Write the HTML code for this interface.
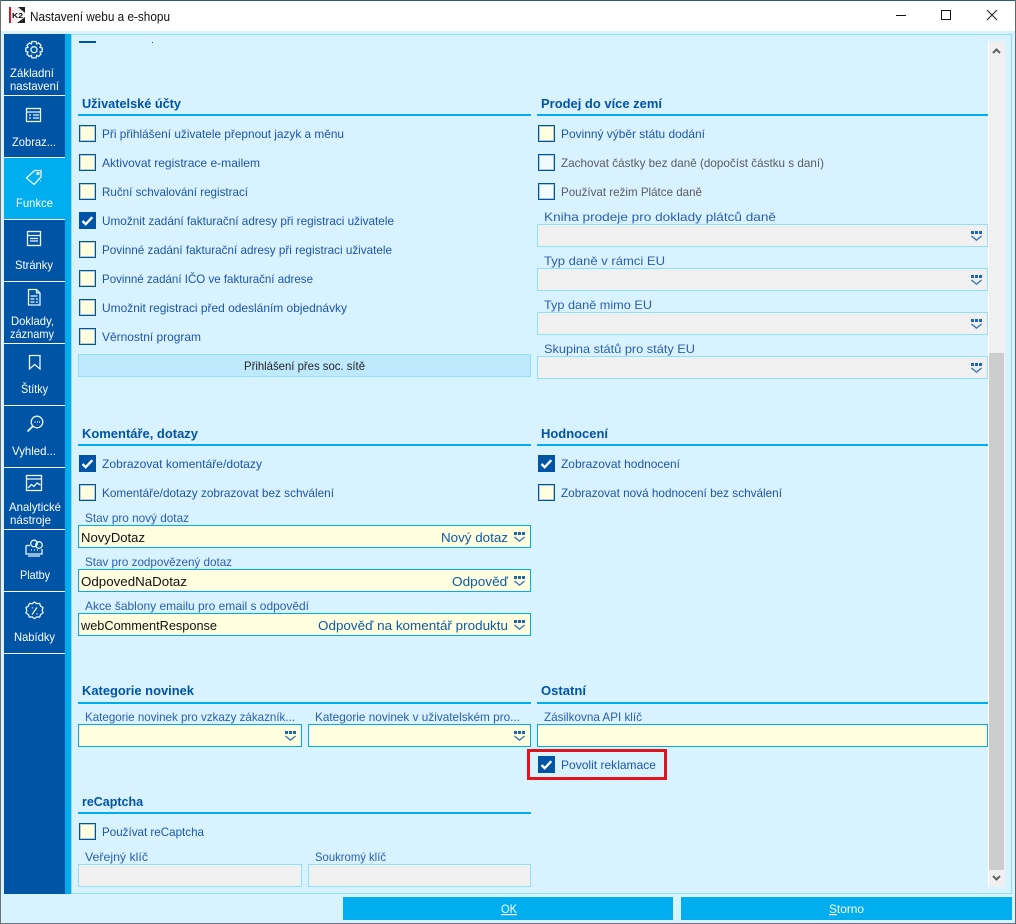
<!DOCTYPE html>
<html><head><meta charset="utf-8"><title>Nastavení webu a e-shopu</title>
<style>
html,body{margin:0;padding:0;background:#d9f2ff;width:1016px;height:924px;overflow:hidden}
svg{display:block;position:absolute;left:0;top:0}
text{font-family:"Liberation Sans",sans-serif;font-size:12px;fill:#1c55ac;white-space:pre}
.h{font-weight:bold;fill:#0054a6;font-size:13px}
.s{fill:#fff}
.l{fill:#2a5fae}
.g{fill:#5a5a62}
.v{fill:#111;font-size:13px}
.r{fill:#0f5aa6;font-size:13px}
.d{fill:#222}
.t{fill:#111;font-size:12.5px}
.ic{fill:none;stroke:#eaf5fc;stroke-width:1.3}
</style></head><body>
<svg width="1016" height="924" viewBox="0 0 1016 924" xmlns="http://www.w3.org/2000/svg" shape-rendering="crispEdges">
<defs>
<g id="cb"><rect x="0.5" y="0.5" width="16" height="16" fill="#ffffe0" stroke="#0054a6"/><rect x="1.500" y="1.500" width="14" height="14" fill="none" stroke="#0054a6" stroke-opacity=".3"/></g>
<g id="cw"><rect x="0.5" y="0.5" width="16" height="16" fill="#f2fbff" stroke="#0054a6"/><rect x="1.500" y="1.500" width="14" height="14" fill="none" stroke="#0054a6" stroke-opacity=".3"/></g>
<g id="ck"><rect width="17" height="17" fill="#0054a6"/><path d="M3.500 9l3.200 3.200 6.600-7" fill="none" stroke="#fff" stroke-width="2.400" shape-rendering="auto"/></g>
<g id="dd"><rect x="0" y="0" width="3" height="3" fill="#1c66b4"/><rect x="4" y="0" width="3" height="3" fill="#1c66b4"/><rect x="8" y="0" width="3" height="3" fill="#1c66b4"/><path d="M0.500 5l5 4.200 5-4.200" fill="none" stroke="#2a70b8" stroke-width="1.300" shape-rendering="auto"/></g>
</defs>

<!-- window -->
<rect width="1016" height="924" fill="#d9f2ff"/>
<rect width="1016" height="31" fill="#fff"/>
<rect width="1016" height="1" fill="#2c5a6e"/>
<rect x="0" y="0" width="1" height="924" fill="#6b7075"/>
<rect x="1015" y="0" width="1" height="924" fill="#5a6a72"/>
<rect x="0" y="923" width="1016" height="1" fill="#6b7075"/>

<!-- logo -->
<rect x="9" y="7" width="16" height="16" fill="#f2f2f2"/>
<rect x="9" y="7" width="2" height="16" fill="#d0182c"/>
<path d="M18 7h7v6zM25 17v6h-8z" fill="#222" shape-rendering="auto"/>
<text x="12" y="18" style="font-size:7px;font-weight:bold;fill:#111" textLength="11" lengthAdjust="spacingAndGlyphs">K2</text>
<text x="30" y="21" class="t" textLength="140" lengthAdjust="spacingAndGlyphs">Nastavení webu a e-shopu</text>

<!-- window controls -->
<rect x="896" y="15" width="10" height="1" fill="#111"/>
<rect x="941.500" y="10.500" width="9" height="9" fill="none" stroke="#111"/>
<path d="M987 10l10 10M997 10l-10 10" stroke="#222" stroke-width="1.100" fill="none" shape-rendering="auto"/>

<!-- frame -->
<rect x="71.500" y="34.500" width="940" height="859" fill="#d9f2ff" stroke="#8fdfff"/>

<!-- sidebar -->
<rect x="4" y="34" width="61" height="860" fill="#0054a6"/>
<rect x="65" y="34" width="6" height="860" fill="#00aeef"/>
<rect x="4" y="158" width="61" height="61" fill="#00aeef"/>
<rect x="4" y="95" width="61" height="1" fill="#fff"/>
<rect x="4" y="157" width="61" height="1" fill="#fff"/>
<rect x="4" y="219" width="61" height="1" fill="#fff"/>
<rect x="4" y="281" width="61" height="1" fill="#fff"/>
<rect x="4" y="343" width="61" height="1" fill="#fff"/>
<rect x="4" y="405" width="61" height="1" fill="#fff"/>
<rect x="4" y="467" width="61" height="1" fill="#fff"/>
<rect x="4" y="529" width="61" height="1" fill="#fff"/>
<rect x="4" y="591" width="61" height="1" fill="#fff"/>
<rect x="4" y="653" width="61" height="1" fill="#fff"/>

<text class="s" x="10" y="77" textLength="44" lengthAdjust="spacingAndGlyphs">Základní</text>
<text class="s" x="10" y="90" textLength="49" lengthAdjust="spacingAndGlyphs">nastavení</text>
<text class="s" x="12" y="146" textLength="44" lengthAdjust="spacingAndGlyphs">Zobraz...</text>
<text class="s" x="16" y="207" textLength="37" lengthAdjust="spacingAndGlyphs">Funkce</text>
<text class="s" x="15" y="269" textLength="38" lengthAdjust="spacingAndGlyphs">Stránky</text>
<text class="s" x="11" y="325" textLength="43" lengthAdjust="spacingAndGlyphs">Doklady,</text>
<text class="s" x="10" y="338" textLength="44" lengthAdjust="spacingAndGlyphs">záznamy</text>
<text class="s" x="21" y="393" textLength="27" lengthAdjust="spacingAndGlyphs">Štítky</text>
<text class="s" x="12" y="455" textLength="44" lengthAdjust="spacingAndGlyphs">Vyhled...</text>
<text class="s" x="9" y="511" textLength="52" lengthAdjust="spacingAndGlyphs">Analytické</text>
<text class="s" x="10" y="524" textLength="41" lengthAdjust="spacingAndGlyphs">nástroje</text>
<text class="s" x="20" y="579" textLength="30" lengthAdjust="spacingAndGlyphs">Platby</text>
<text class="s" x="14" y="641" textLength="41" lengthAdjust="spacingAndGlyphs">Nabídky</text>

<!-- sidebar icons -->
<g class="ic" shape-rendering="auto">
<path d="M32 41.500h4l.6 2.300 2-.9 2.400 2.400-1 2 2.200.7v3.400l-2.200.7 1 2-2.400 2.400-2-1-.6 2.400h-4l-.6-2.400-2 1-2.400-2.400 1-2-2.200-.7V48l2.200-.7-1-2 2.400-2.400 2 .9z"/><circle cx="34" cy="49.700" r="3"/>
<rect x="26.500" y="108.500" width="14" height="13"/><path d="M26.500 112h14M29 115h2M33 115h6M29 118h2M33 118h6" />
<path d="M26.500 178l8-7.500h6.500v6.500l-7 7.500z"/><circle cx="38" cy="173.500" r="1"/><path d="M37 181l3-3M40 181h.8"/>
<rect x="27.500" y="231.500" width="13" height="14"/><path d="M27.500 235.500h13M30 238.500h8M30 241h8M29 245.500h2M33 245.500h2M37 245.500h2"/>
<path d="M28.500 289.500h8l3.500 3.500v12h-11.500zM36.500 289.500v3.500h3.500M30.500 296h7M30.500 299h4M36 299h2M30.500 302h4M36 302h2"/>
<path d="M29.500 355.500h10.500v13.500l-5.250-4.500-5.250 4.500z"/>
<circle cx="37" cy="422" r="5.800"/><path d="M32.800 426.200l-5.300 5.300" stroke-width="1.800"/><path d="M34.500 422h1M37 422h1M39 422h1"/>
<rect x="26.500" y="475.500" width="15" height="15"/><path d="M26.500 479h15M28 488l3.500-3.500 2.500 2 3-3.500 3.500 2"/>
<path d="M26 545.500h4M26 545.500v8.500h16v-5M28 556h12"/><circle cx="34" cy="543.500" r="3.300"/><circle cx="39" cy="545" r="3.300"/><path d="M31 550h1M34 550h1M37 550h1"/>
<path d="M34.500 602l2.300 1.700 2.800-.3 1 2.700 2.400 1.500-.8 2.700.8 2.700-2.400 1.500-1 2.700-2.800-.3-2.300 1.700-2.300-1.700-2.800.3-1-2.700-2.400-1.500.8-2.700-.8-2.700 2.400-1.500 1-2.700 2.800.3z"/><path d="M37 607.500l-5 7M31.800 607.800h1M36.500 613.800h1"/>
</g>

<!-- top stubs -->
<rect x="79" y="41" width="17" height="2" fill="#0054a6"/>
<rect x="152" y="42" width="1" height="1" fill="#0054a6"/>

<!-- section underlines -->
<rect x="78" y="114" width="453" height="2" fill="#00aeef"/><rect x="537" y="114" width="451" height="2" fill="#00aeef"/>
<rect x="78" y="444" width="453" height="2" fill="#00aeef"/><rect x="537" y="444" width="451" height="2" fill="#00aeef"/>
<rect x="78" y="702" width="453" height="2" fill="#00aeef"/><rect x="537" y="702" width="451" height="2" fill="#00aeef"/>
<rect x="78" y="812" width="453" height="2" fill="#00aeef"/>

<!-- headings -->
<text class="h" x="82" y="108" textLength="99" lengthAdjust="spacingAndGlyphs">Uživatelské účty</text>
<text class="h" x="541" y="108" textLength="121" lengthAdjust="spacingAndGlyphs">Prodej do více zemí</text>
<text class="h" x="82" y="438" textLength="116" lengthAdjust="spacingAndGlyphs">Komentáře, dotazy</text>
<text class="h" x="541" y="438" textLength="67" lengthAdjust="spacingAndGlyphs">Hodnocení</text>
<text class="h" x="82" y="695" textLength="112" lengthAdjust="spacingAndGlyphs">Kategorie novinek</text>
<text class="h" x="541" y="695" textLength="45" lengthAdjust="spacingAndGlyphs">Ostatní</text>
<text class="h" x="82" y="806" textLength="61" lengthAdjust="spacingAndGlyphs">reCaptcha</text>

<!-- checkboxes -->
<use href="#cb" x="79" y="125"/><text x="102" y="138" textLength="242" lengthAdjust="spacingAndGlyphs">Při přihlášení uživatele přepnout jazyk a měnu</text>
<use href="#cb" x="79" y="154"/><text x="102" y="167" textLength="158" lengthAdjust="spacingAndGlyphs">Aktivovat registrace e-mailem</text>
<use href="#cb" x="79" y="183"/><text x="102" y="196" textLength="146" lengthAdjust="spacingAndGlyphs">Ruční schvalování registrací</text>
<use href="#ck" x="79" y="212"/><text x="102" y="225" textLength="292" lengthAdjust="spacingAndGlyphs">Umožnit zadání fakturační adresy při registraci uživatele</text>
<use href="#cb" x="79" y="241"/><text x="102" y="254" textLength="290" lengthAdjust="spacingAndGlyphs">Povinné zadání fakturační adresy při registraci uživatele</text>
<use href="#cb" x="79" y="270"/><text x="102" y="283" textLength="211" lengthAdjust="spacingAndGlyphs">Povinné zadání IČO ve fakturační adrese</text>
<use href="#cb" x="79" y="299"/><text x="102" y="312" textLength="245" lengthAdjust="spacingAndGlyphs">Umožnit registraci před odesláním objednávky</text>
<use href="#cb" x="79" y="328"/><text x="102" y="341" textLength="99" lengthAdjust="spacingAndGlyphs">Věrnostní program</text>

<rect x="78.500" y="354.500" width="452" height="22" fill="#bfeafd" stroke="#8fdfff"/>
<text class="d" x="244" y="370" textLength="121" lengthAdjust="spacingAndGlyphs">Přihlášení přes soc. sítě</text>

<use href="#cb" x="538" y="125"/><text x="561" y="138" textLength="144" lengthAdjust="spacingAndGlyphs">Povinný výběr státu dodání</text>
<use href="#cw" x="538" y="154"/><text class="g" x="561" y="167" textLength="263" lengthAdjust="spacingAndGlyphs">Zachovat částky bez daně (dopočíst částku s daní)</text>
<use href="#cw" x="538" y="183"/><text class="g" x="561" y="196" textLength="141" lengthAdjust="spacingAndGlyphs">Používat režim Plátce daně</text>

<text class="l" x="544" y="221" textLength="232" lengthAdjust="spacingAndGlyphs">Kniha prodeje pro doklady plátců daně</text>
<text class="l" x="544" y="265" textLength="121" lengthAdjust="spacingAndGlyphs">Typ daně v rámci EU</text>
<text class="l" x="544" y="309" textLength="108" lengthAdjust="spacingAndGlyphs">Typ daně mimo EU</text>
<text class="l" x="544" y="353" textLength="151" lengthAdjust="spacingAndGlyphs">Skupina států pro státy EU</text>
<rect x="537.500" y="224.500" width="450" height="22" fill="#f0f0f0" stroke="#8fdfff"/><use href="#dd" x="971" y="231"/>
<rect x="537.500" y="268.500" width="450" height="22" fill="#f0f0f0" stroke="#8fdfff"/><use href="#dd" x="971" y="275"/>
<rect x="537.500" y="312.500" width="450" height="22" fill="#f0f0f0" stroke="#8fdfff"/><use href="#dd" x="971" y="319"/>
<rect x="537.500" y="356.500" width="450" height="22" fill="#f0f0f0" stroke="#8fdfff"/><use href="#dd" x="971" y="363"/>

<!-- comments -->
<use href="#ck" x="79" y="455"/><text x="102" y="468" textLength="160" lengthAdjust="spacingAndGlyphs">Zobrazovat komentáře/dotazy</text>
<use href="#cb" x="79" y="484"/><text x="102" y="497" textLength="232" lengthAdjust="spacingAndGlyphs">Komentáře/dotazy zobrazovat bez schválení</text>
<text class="l" x="85" y="522" textLength="104" lengthAdjust="spacingAndGlyphs">Stav pro nový dotaz</text>
<text class="l" x="85" y="566" textLength="147" lengthAdjust="spacingAndGlyphs">Stav pro zodpovězený dotaz</text>
<text class="l" x="85" y="610" textLength="224" lengthAdjust="spacingAndGlyphs">Akce šablony emailu pro email s odpovědí</text>
<rect x="78.500" y="525.500" width="452" height="22" fill="#ffffe0" stroke="#00aeef"/><use href="#dd" x="514" y="532"/>
<rect x="78.500" y="569.500" width="452" height="22" fill="#ffffe0" stroke="#00aeef"/><use href="#dd" x="514" y="576"/>
<rect x="78.500" y="613.500" width="452" height="22" fill="#ffffe0" stroke="#00aeef"/><use href="#dd" x="514" y="620"/>
<text class="v" x="81" y="542" textLength="64" lengthAdjust="spacingAndGlyphs">NovyDotaz</text>
<text class="v" x="81" y="586" textLength="106" lengthAdjust="spacingAndGlyphs">OdpovedNaDotaz</text>
<text class="v" x="81" y="630" textLength="136" lengthAdjust="spacingAndGlyphs">webCommentResponse</text>
<text class="r" x="441" y="542" textLength="67" lengthAdjust="spacingAndGlyphs">Nový dotaz</text>
<text class="r" x="452" y="586" textLength="56" lengthAdjust="spacingAndGlyphs">Odpověď</text>
<text class="r" x="318" y="630" textLength="190" lengthAdjust="spacingAndGlyphs">Odpověď na komentář produktu</text>

<!-- ratings -->
<use href="#ck" x="538" y="455"/><text x="561" y="468" textLength="119" lengthAdjust="spacingAndGlyphs">Zobrazovat hodnocení</text>
<use href="#cb" x="538" y="484"/><text x="561" y="497" textLength="221" lengthAdjust="spacingAndGlyphs">Zobrazovat nová hodnocení bez schválení</text>

<!-- news -->
<text class="l" x="85" y="721" textLength="210" lengthAdjust="spacingAndGlyphs">Kategorie novinek pro vzkazy zákazník...</text>
<text class="l" x="315" y="721" textLength="205" lengthAdjust="spacingAndGlyphs">Kategorie novinek v uživatelském pro...</text>
<rect x="78.500" y="724.500" width="223" height="22" fill="#ffffe0" stroke="#00aeef"/><use href="#dd" x="285" y="731"/>
<rect x="308.500" y="724.500" width="222" height="22" fill="#ffffe0" stroke="#00aeef"/><use href="#dd" x="514" y="731"/>

<text class="l" x="544" y="721" textLength="98" lengthAdjust="spacingAndGlyphs">Zásilkovna API klíč</text>
<rect x="537.500" y="724.500" width="450" height="22" fill="#ffffe0" stroke="#00aeef"/>

<rect x="528.500" y="750.500" width="137" height="28" fill="none" stroke="#e0141f" stroke-width="3"/>
<use href="#ck" x="538" y="756"/><text x="561" y="769" textLength="95" lengthAdjust="spacingAndGlyphs">Povolit reklamace</text>

<!-- recaptcha -->
<use href="#cb" x="79" y="823"/><text x="102" y="836" textLength="102" lengthAdjust="spacingAndGlyphs">Používat reCaptcha</text>
<text class="l" x="85" y="861" textLength="63" lengthAdjust="spacingAndGlyphs">Veřejný klíč</text>
<text class="l" x="315" y="861" textLength="71" lengthAdjust="spacingAndGlyphs">Soukromý klíč</text>
<rect x="78.500" y="864.500" width="223" height="22" fill="#f0f0f0" stroke="#8fdfff"/>
<rect x="308.500" y="864.500" width="222" height="22" fill="#f0f0f0" stroke="#8fdfff"/>

<!-- scrollbar -->
<rect x="988" y="41" width="1" height="846" fill="#fff"/>
<rect x="989" y="41" width="16" height="846" fill="#f0f0f0"/>
<rect x="989" y="353" width="15" height="517" fill="#cdcdcd"/>
<path d="M993 53l3.500-3.500L1000 53" fill="none" stroke="#606060" stroke-width="2" shape-rendering="auto"/>
<path d="M993 876l3.500 3.500 3.500-3.500" fill="none" stroke="#606060" stroke-width="2" shape-rendering="auto"/>

<!-- buttons -->
<rect x="343" y="897" width="330" height="23" fill="#00aeef"/>
<rect x="681" y="897" width="331" height="23" fill="#00aeef"/>
<text class="s" x="501" y="913" textLength="16" lengthAdjust="spacingAndGlyphs" text-decoration="underline">OK</text>
<text class="s" x="829" y="913" textLength="35" lengthAdjust="spacingAndGlyphs"><tspan text-decoration="underline">S</tspan>torno</text>
</svg>
</body></html>
